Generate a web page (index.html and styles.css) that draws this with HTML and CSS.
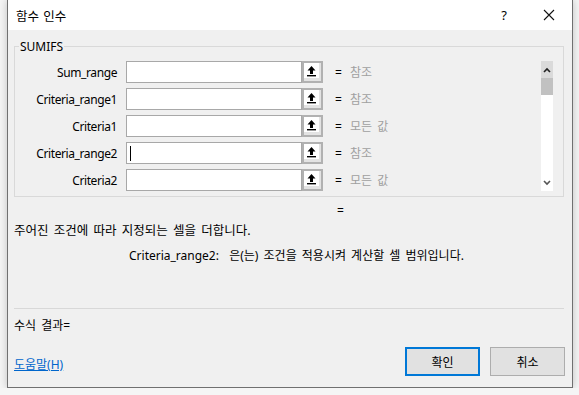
FILE: index.html
```html
<!DOCTYPE html>
<html lang="ko">
<head>
  <meta charset="UTF-8" />
  <title>함수 인수</title>
  <link rel="stylesheet" href="styles.css">
</head>
<body>
  <div class="dialog">
    <div class="titlebar">
      <span class="title">함수 인수</span>
      <span class="help">?</span>
      <span class="close">
        <svg width="12" height="12" viewBox="0 0 12 12"><path d="M1 1L11 11M11 1L1 11" stroke="#111" stroke-width="1.1" fill="none"/></svg>
      </span>
    </div>

    <div class="content">
      <fieldset class="group">
        <legend>SUMIFS</legend>
        <div class="group-inner">
          <div class="rows">
            <div class="arg-row">
              <label>Sum_range</label>
              <div class="field"></div>
              <button class="ref-btn"><svg width="11" height="12" viewBox="0 0 11 12"><path d="M5.5 1L9.5 5.5H7V9H4V5.5H1.5Z" fill="#000"/><rect x="1" y="10" width="9" height="1.4" fill="#000"/></svg></button>
              <span class="eq">=</span>
              <span class="val">참조</span>
            </div>
            <div class="arg-row">
              <label>Criteria_range1</label>
              <div class="field"></div>
              <button class="ref-btn"><svg width="11" height="12" viewBox="0 0 11 12"><path d="M5.5 1L9.5 5.5H7V9H4V5.5H1.5Z" fill="#000"/><rect x="1" y="10" width="9" height="1.4" fill="#000"/></svg></button>
              <span class="eq">=</span>
              <span class="val">참조</span>
            </div>
            <div class="arg-row">
              <label>Criteria1</label>
              <div class="field"></div>
              <button class="ref-btn"><svg width="11" height="12" viewBox="0 0 11 12"><path d="M5.5 1L9.5 5.5H7V9H4V5.5H1.5Z" fill="#000"/><rect x="1" y="10" width="9" height="1.4" fill="#000"/></svg></button>
              <span class="eq">=</span>
              <span class="val">모든 값</span>
            </div>
            <div class="arg-row">
              <label>Criteria_range2</label>
              <div class="field"><span class="caret"></span></div>
              <button class="ref-btn"><svg width="11" height="12" viewBox="0 0 11 12"><path d="M5.5 1L9.5 5.5H7V9H4V5.5H1.5Z" fill="#000"/><rect x="1" y="10" width="9" height="1.4" fill="#000"/></svg></button>
              <span class="eq">=</span>
              <span class="val">참조</span>
            </div>
            <div class="arg-row">
              <label>Criteria2</label>
              <div class="field"></div>
              <button class="ref-btn"><svg width="11" height="12" viewBox="0 0 11 12"><path d="M5.5 1L9.5 5.5H7V9H4V5.5H1.5Z" fill="#000"/><rect x="1" y="10" width="9" height="1.4" fill="#000"/></svg></button>
              <span class="eq">=</span>
              <span class="val">모든 값</span>
            </div>
          </div>

          <div class="scrollbar">
            <div class="sb-up"><svg width="8" height="6" viewBox="0 0 8 6"><path d="M1 5L4 2L7 5" stroke="#222" stroke-width="1.6" fill="none"/></svg></div>
            <div class="sb-thumb"></div>
            <div class="sb-track"></div>
            <div class="sb-down"><svg width="8" height="6" viewBox="0 0 8 6"><path d="M1 1L4 4L7 1" stroke="#555" stroke-width="1.6" fill="none"/></svg></div>
          </div>
        </div>
      </fieldset>

      <div class="result-eq">=</div>
      <div class="desc">주어진 조건에 따라 지정되는 셀을 더합니다.</div>
      <div class="arg-help">Criteria_range2:&nbsp;&nbsp;은(는) 조건을 적용시켜 계산할 셀 범위입니다.</div>

      <div class="separator"></div>
      <div class="formula">수식 결과=</div>

      <div class="footer">
        <a class="help-link" href="#">도움말(H)</a>
        <div class="buttons">
          <button class="btn btn-default">확인</button>
          <button class="btn">취소</button>
        </div>
      </div>
    </div>
  </div>
</body>
</html>
```

FILE: styles.css
```css
body {
  margin: 0;
  background: #f5f5f5;
  font-family: "Noto Sans", "Noto Sans CJK KR", sans-serif;
  font-size: 12px;
  color: #000;
}

.dialog {
  margin-left: 7px;
  width: 564px;
  height: 387px;
  border: 1px solid #707070;
  border-top: none;
  background: #f0f0f0;
  display: flex;
  flex-direction: column;
  box-shadow: 0 0 8px rgba(0, 0, 0, 0.22);
}

.titlebar {
  height: 30px;
  flex: 0 0 30px;
  background: #fff;
  display: flex;
  align-items: center;
  padding-left: 8px;
}

.title {
  flex: 1;
  font-size: 12.5px;
  word-spacing: 1px;
}

.help {
  width: 12px;
  font-size: 13px;
  margin-right: 33px;
  text-align: center;
}

.close {
  width: 12px;
  height: 12px;
  margin-right: 17px;
  display: flex;
}

.content {
  padding: 8px 8px 0 6px;
  display: flex;
  flex-direction: column;
}

.group {
  margin: 0;
  border: 1px solid #d9d9d9;
  padding: 6px 10px 5px 4px;
}

.group legend {
  padding: 0 1px;
  line-height: 17px;
}

.group-inner {
  display: flex;
}

.rows {
  flex: 1;
  display: flex;
  flex-direction: column;
  gap: 5px;
}

.arg-row {
  display: flex;
  align-items: center;
  height: 22px;
}

.arg-row label {
  width: 98px;
  text-align: right;
  margin-right: 9px;
  letter-spacing: -0.4px;
}

.field {
  width: 174px;
  height: 20px;
  background: #fff;
  border: 1px solid #a8a8a8;
  display: flex;
  align-items: center;
}

.caret {
  width: 1px;
  height: 15px;
  background: #000;
  margin-left: 3px;
}

.ref-btn {
  width: 21px;
  height: 22px;
  padding: 0;
  border: 2px solid #b1b1b1;
  background: #e3e3e3;
  display: flex;
  align-items: flex-start;
  justify-content: flex-start;
}

.ref-btn svg {
  background: #fff;
  width: 15px;
  height: 15px;
  padding: 2px 2px 1px 2px;
  box-sizing: border-box;
}

.eq {
  margin-left: 12px;
  width: 15px;
}

.val {
  color: #a0a0a0;
  word-spacing: 2px;
}

.scrollbar {
  width: 12px;
  height: 130px;
  background: #fff;
  display: flex;
  flex-direction: column;
}

.sb-up {
  height: 17px;
  background: #dadada;
  display: flex;
  align-items: center;
  justify-content: center;
}

.sb-thumb {
  height: 17px;
  background: #c1c1c1;
}

.sb-track {
  flex: 1;
}

.sb-down {
  height: 17px;
  display: flex;
  align-items: center;
  justify-content: center;
}

.result-eq {
  line-height: 16px;
  margin-top: 6px;
  padding-left: 323px;
}

.desc {
  line-height: 16px;
  margin-top: 4px;
  word-spacing: 2px;
  font-size: 12.5px;
}

.arg-help {
  line-height: 16px;
  margin-top: 9px;
  padding-left: 115px;
  word-spacing: 2px;
}

.separator {
  height: 1px;
  background: #d8d8d8;
  margin-top: 44px;
}

.formula {
  line-height: 16px;
  margin-top: 9px;
  word-spacing: 2px;
}

.footer {
  margin-top: 13px;
  display: flex;
  align-items: center;
  justify-content: space-between;
}

.help-link {
  color: #0066cc;
  padding-top: 4px;
}

.buttons {
  display: flex;
  gap: 10px;
  margin-right: -1px;
}

.btn {
  width: 75px;
  height: 29px;
  font-family: inherit;
  font-size: 12px;
  background: #e1e1e1;
  border: 1px solid #adadad;
  padding: 0;
}

.btn-default {
  border: 2px solid #0078d7;
}
```
